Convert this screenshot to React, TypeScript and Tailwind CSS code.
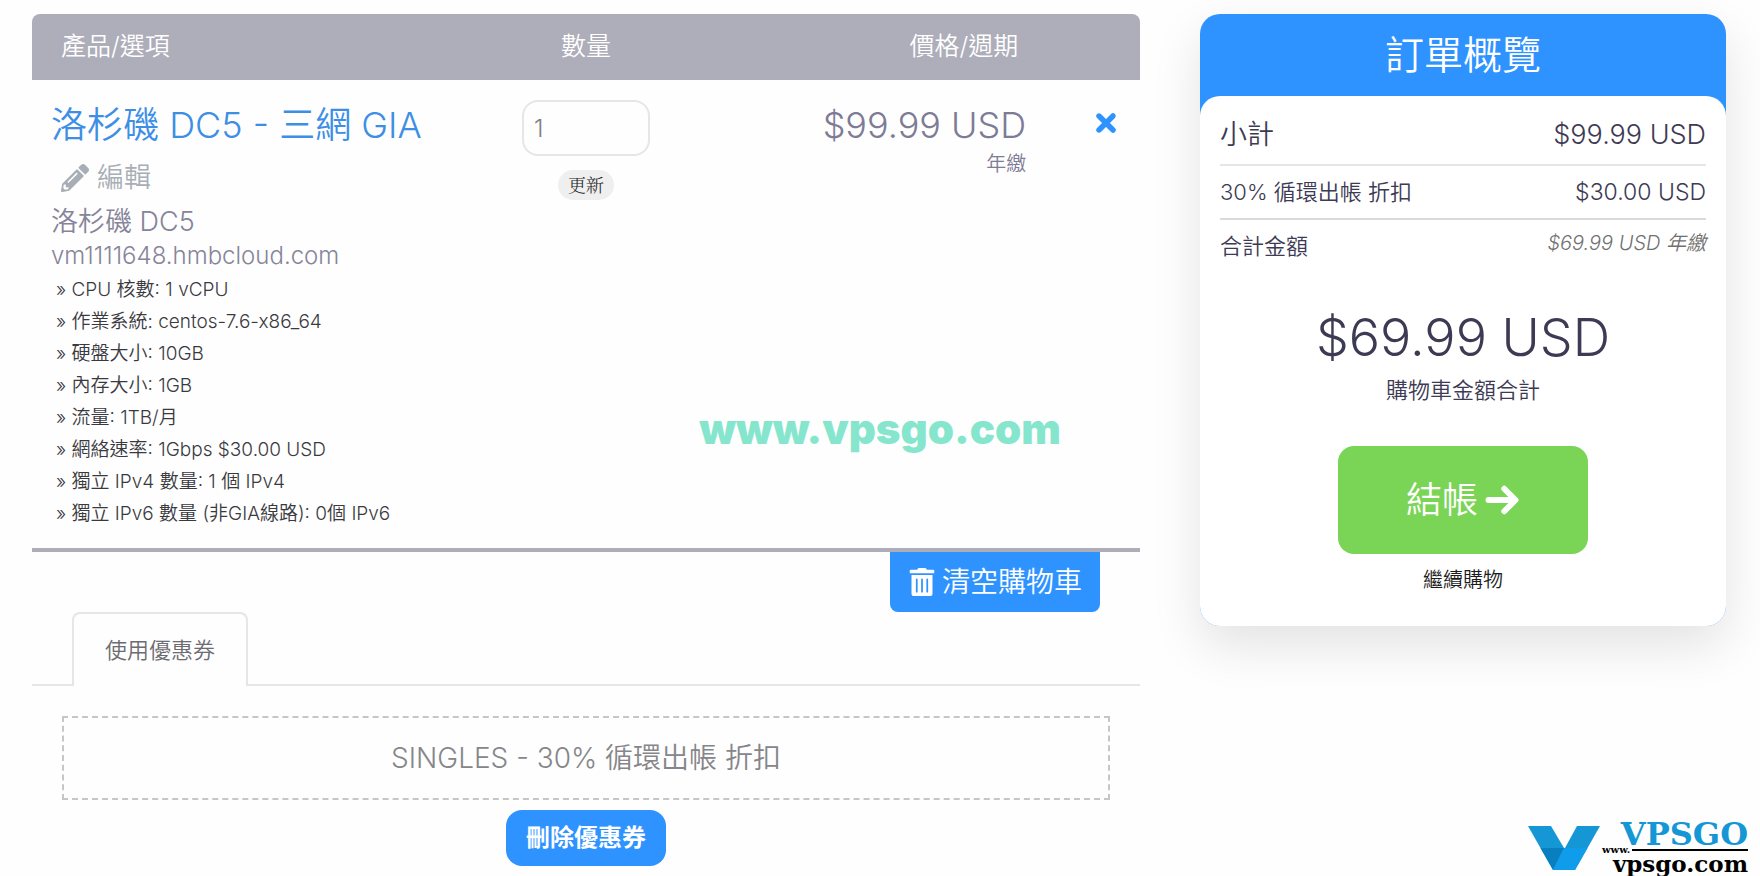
import { FaPencilAlt, FaTrashAlt } from "react-icons/fa";
import { FaArrowRight, FaXmark } from "react-icons/fa6";

const options = [
  "CPU 核數: 1 vCPU",
  "作業系統: centos-7.6-x86_64",
  "硬盤大小: 10GB",
  "內存大小: 1GB",
  "流量: 1TB/月",
  "網絡速率: 1Gbps $30.00 USD",
  "獨立 IPv4 數量: 1 個 IPv4",
  "獨立 IPv6 數量 (非GIA線路): 0個 IPv6",
];

function CartTable() {
  return (
    <table className="w-full table-fixed border-separate border-spacing-0 overflow-hidden rounded-t-lg">
      <colgroup>
        <col className="w-[40%]" />
        <col className="w-[20%]" />
        <col className="w-[31%]" />
        <col className="w-[9%]" />
      </colgroup>
      <thead>
        <tr className="h-[66px] bg-[#aeadba] text-[25px] text-white">
          <th scope="col" className="pl-[29px] text-left font-[350]">產品/選項</th>
          <th scope="col" className="text-center font-[350]">數量</th>
          <th scope="col" className="pr-[22px] text-right font-[350]">價格/週期</th>
          <td />
        </tr>
      </thead>
      <tbody>
        <tr className="align-top">
          <td className="border-b-4 border-[#aeadba] pt-5 pb-[18px] pl-[19px] whitespace-nowrap">
            <div className="text-4xl leading-[50px] text-[#3d8fe6]">洛杉磯 DC5 - 三網 GIA</div>
            <a href="#edit" className="flex items-center gap-2 pl-2.5 text-[27px] leading-[56px] text-[#a8aeb6]">
              <FaPencilAlt className="size-7" />
              編輯
            </a>
            <div className="text-[27px] leading-8 text-[#86849a]">洛杉磯 DC5</div>
            <div className="text-2xl leading-9 text-[#86849a]">vm1111648.hmbcloud.com</div>
            <ul className="pl-[5px] text-[19px] leading-8 text-[#3a3a3e]">
              {options.map((o) => (
                <li key={o}>» {o}</li>
              ))}
            </ul>
          </td>
          <td className="border-b-4 border-[#aeadba] pt-5">
            <div className="flex flex-col items-center gap-3.5">
              <input
                aria-label="數量"
                defaultValue="1"
                className="h-14 w-32 rounded-2xl border-2 border-[#e6e6ea] pl-2.5 text-2xl text-[#808080]"
              />
              <button className="h-[30px] rounded-full bg-[#efefef] px-2.5 pt-0.5 font-['Liberation_Serif','Noto_Serif_CJK_TC','Noto_Sans_CJK_TC',serif] text-lg leading-none text-[#1c1c1c]">
                更新
              </button>
            </div>
          </td>
          <td className="border-b-4 border-[#aeadba] pt-5 pr-3.5 text-right text-[#7d7b95]">
            <div className="text-4xl leading-[50px]">$99.99 USD</div>
            <div className="text-xl leading-7">年繳</div>
          </td>
          <td className="border-b-4 border-[#aeadba] pt-[29px] pr-5 text-right">
            <button aria-label="移除" className="text-[#2f93ff]">
              <FaXmark className="size-7 stroke-current stroke-[36px]" />
            </button>
          </td>
        </tr>
      </tbody>
    </table>
  );
}

function Summary() {
  return (
    <aside className="rounded-[20px] bg-[#2f93ff] text-[#3d3a54] shadow-[0_20px_50px_rgba(0,0,0,0.11)]">
      <h2 className="text-center text-[39px] leading-[82px] text-white">訂單概覽</h2>
      <div className="rounded-[20px] bg-white px-5 pb-8">
        <div className="flex h-[70px] items-center justify-between border-b-2 border-[#e6e6e8] pt-2.5 text-[27px]">
          <span>小計</span>
          <span>$99.99 USD</span>
        </div>
        <div className="flex h-[54px] items-center justify-between border-b-2 border-[#dadadc]">
          <span className="text-[22px]">30% 循環出帳 折扣</span>
          <span className="text-[23px]">$30.00 USD</span>
        </div>
        <div className="flex h-[52px] items-center justify-between">
          <span className="text-[22px]">合計金額</span>
          <span className="pb-1.5 text-xl text-[#707070] italic">$69.99 USD 年繳</span>
        </div>
        <div className="flex flex-col items-center pt-8">
          <div className="text-[52px] leading-[68px] font-light">$69.99 USD</div>
          <div className="text-[22px] leading-9">購物車金額合計</div>
          <button className="mt-[38px] flex h-[108px] w-[250px] items-center justify-center gap-1.5 rounded-2xl bg-[#7ad456] text-4xl text-white">
            結帳
            <FaArrowRight className="size-9 stroke-current stroke-[20px]" />
          </button>
          <a href="#shop" className="mt-3 text-xl leading-7 text-[#1c1c1c]">繼續購物</a>
        </div>
      </div>
    </aside>
  );
}

function Logo() {
  return (
    <div className="absolute right-3 bottom-0.5 flex items-center gap-0.5">
      <svg viewBox="0 0 72 44" className="h-11 w-[72px]" aria-hidden="true">
        <path d="M0 0H23L36 22L47 44H25Z" fill="#1597d6" />
        <path d="M49 0H72L47 44H25Z" fill="#1597d6" />
        <path d="M12.500 22H36L25 44Z" fill="#0a7fbf" />
        <path d="M36 22H59.500L47 44H25Z" fill="#0f9deb" />
      </svg>
      <div className="flex min-w-[146px] flex-col items-end font-['DejaVu_Serif',serif] font-bold">
        <span className="text-[32px] leading-6 text-[#1597d6]">VPSGO</span>
        <span className="flex w-full items-center gap-0.5">
          <span className="text-[10px] leading-2 text-black">www.</span>
          <span className="h-0.5 grow bg-black" />
        </span>
        <span className="text-[23px] leading-5 text-black">vpsgo.com</span>
      </div>
    </div>
  );
}

export default function App() {
  return (
    <main className="relative grid min-h-screen grid-cols-[1108fr_526fr] items-start gap-[60px] bg-[#fefefe] pt-3.5 pr-[34px] pb-2.5 pl-8 font-[Inter,'Noto_Sans_CJK_TC',sans-serif] font-[350]">
      <section className="min-w-0">
        <CartTable />
        <div className="flex justify-end pr-10">
          <button className="flex h-[60px] items-center gap-1.5 rounded-b-lg bg-[#2f93ff] px-[18px] text-[28px] text-white">
            <FaTrashAlt className="size-7" />
            清空購物車
          </button>
        </div>
        <div className="flex border-b-2 border-[#e6e6e8] pl-10">
          <button className="-mb-0.5 h-[74px] rounded-t-lg border-2 border-b-0 border-[#e6e6e8] bg-[#fefefe] px-[31px] text-[22px] text-[#6c6c72]">
            使用優惠券
          </button>
        </div>
        <div className="mx-[30px] mt-[30px] flex h-[84px] items-center justify-center border-2 border-dashed border-[#c6c6c6] text-[28px] text-[#86868a]">
          SINGLES - 30% 循環出帳 折扣
        </div>
        <div className="mt-2.5 flex justify-center">
          <button className="h-14 rounded-2xl bg-[#2f93ff] px-5 text-2xl font-bold text-white">刪除優惠券</button>
        </div>
      </section>
      <Summary />
      <div className="pointer-events-none absolute top-[49%] left-1/2 -translate-x-1/2 -translate-y-1/2 text-[42px] leading-none font-black text-[#86e6cd]">
        www.vpsgo.com
      </div>
      <Logo />
    </main>
  );
}
